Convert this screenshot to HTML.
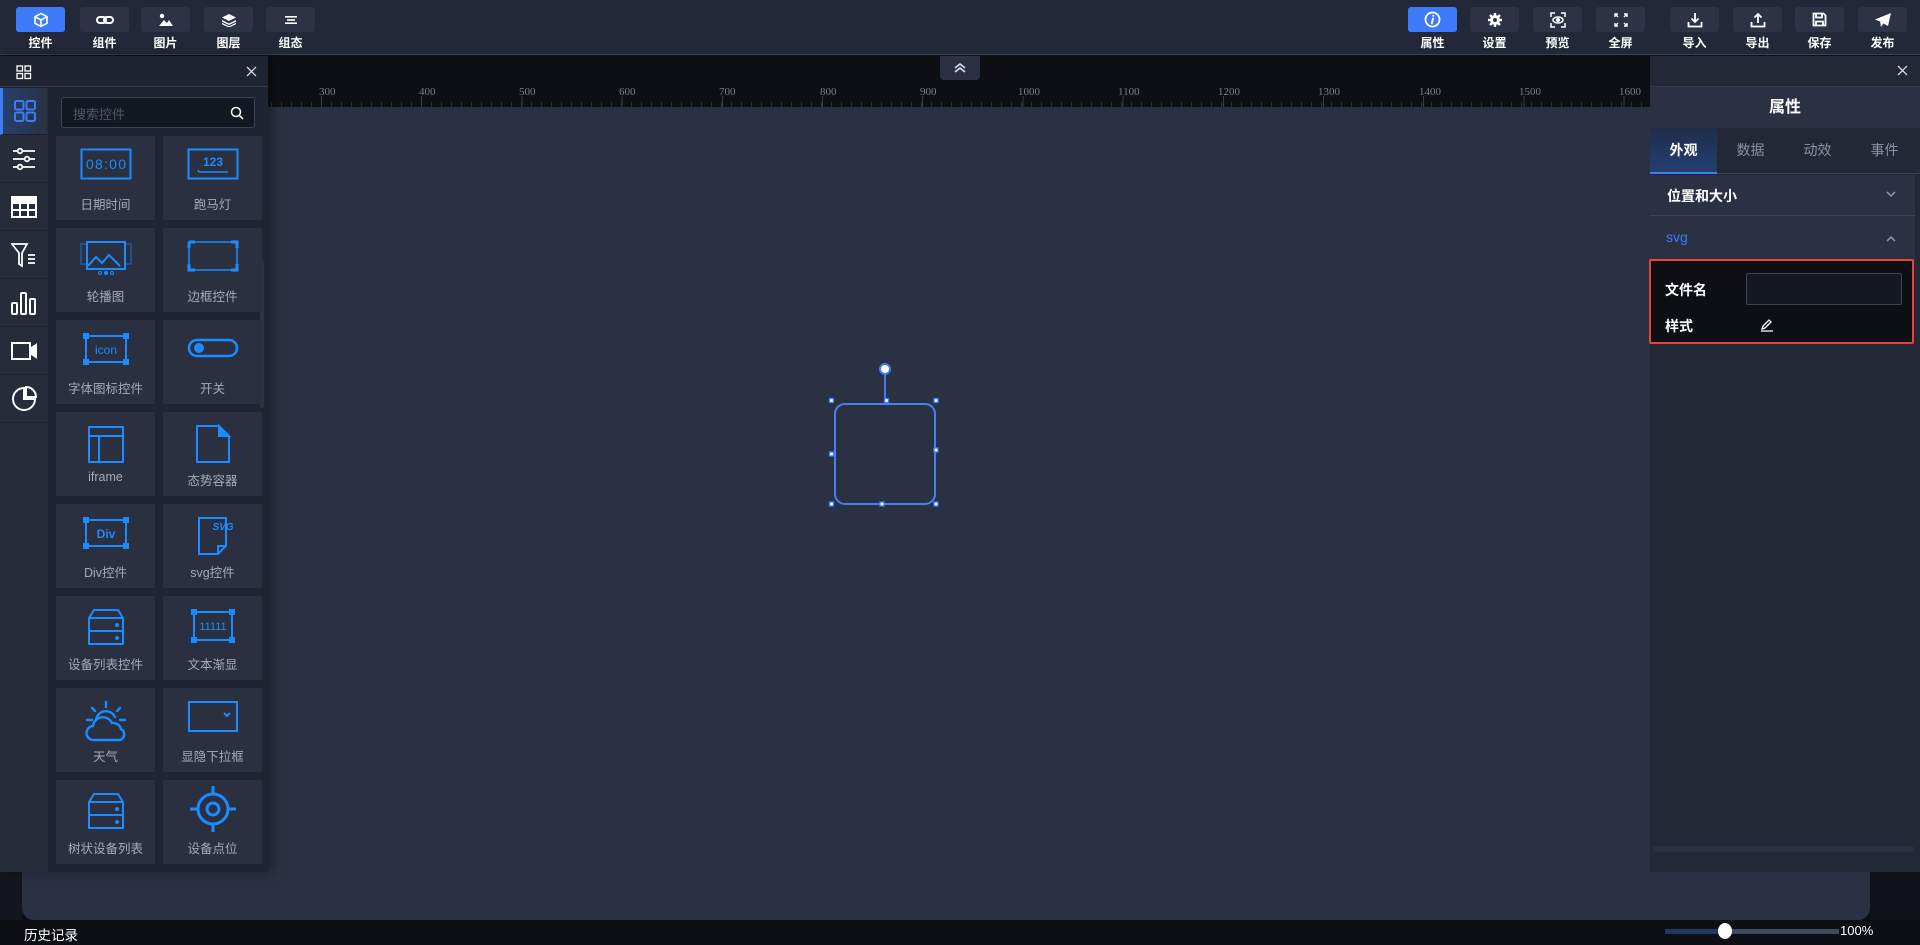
<!DOCTYPE html>
<html><head><meta charset="utf-8"><style>
*{box-sizing:border-box;margin:0;padding:0}
body{width:1920px;height:945px;overflow:hidden;background:#0d0f14;font-family:"Liberation Sans","Noto Sans CJK SC",sans-serif;position:relative;color:#fff}
.a{position:absolute}
.top{left:0;top:0;width:1920px;height:55px;background:#222837;border-bottom:1px solid #3a4358}
.tb{position:absolute;top:7px;width:49px;height:25px;background:#2c3344;border-radius:3px;display:flex;align-items:center;justify-content:center}
.tb.on{background:#3e7bfa}
.tl{position:absolute;top:34px;width:49px;text-align:center;font-size:12px;font-weight:bold;color:#fff}
.card{position:absolute;background:#2a3040;width:99px;height:84px}
.card .lb{position:absolute;left:0;right:0;top:58px;text-align:center;font-size:12.5px;color:#a3abbb}
.card svg{position:absolute;left:50%;top:12px;transform:translateX(-50%)}
.side{position:absolute;left:0;width:47px;height:47px;border-bottom:1px solid #1a1f2a;display:flex;align-items:center;justify-content:center}
.rl{position:absolute;top:86px;font-family:"Liberation Serif",serif;font-size:11px;color:#7a7f89}
</style></head><body>
<div class="a top">
<div class="tb on" style="left:16px"><svg width="16" height="16" viewBox="0 0 16 16" fill="none" stroke="#fff" stroke-width="1.6"><path d="M8 1.5l6 3.2v6.6L8 14.5 2 11.3V4.7z M2 4.7L8 8l6-3.3 M8 8v6.5"/></svg></div><div class="tl" style="left:16px">控件</div>
<div class="tb" style="left:80px"><svg width="18" height="10" viewBox="0 0 18 10" fill="none" stroke="#fff" stroke-width="2"><rect x="1" y="2" width="9" height="6" rx="3"/><rect x="8" y="2" width="9" height="6" rx="3"/></svg></div><div class="tl" style="left:80px">组件</div>
<div class="tb" style="left:141px"><svg width="16" height="14" viewBox="0 0 16 14" fill="#fff"><circle cx="4" cy="3" r="2.2"/><path d="M1 13l5-6 3 3 2-3 4 6z"/></svg></div><div class="tl" style="left:141px">图片</div>
<div class="tb" style="left:204px"><svg width="16" height="14" viewBox="0 0 16 14" fill="#fff"><path d="M8 1l7 3.5-7 3.5-7-3.5z"/><path d="M1 7l7 3.5L15 7v1.6L8 12 1 8.6z" /><path d="M1 9.8l7 3.5 7-3.5v1.4L8 14.5 1 11.2z"/></svg></div><div class="tl" style="left:204px">图层</div>
<div class="tb" style="left:266px"><svg width="14" height="10" viewBox="0 0 14 10" fill="#fff"><rect x="1" y="1" width="12" height="1.6"/><rect x="3" y="4.2" width="8" height="1.6"/><rect x="1" y="7.4" width="12" height="1.6"/></svg></div><div class="tl" style="left:266px">组态</div>

<div class="tb on" style="left:1408px"><svg width="17" height="17" viewBox="0 0 17 17" fill="none" stroke="#fff" stroke-width="1.8"><circle cx="8.5" cy="8.5" r="7"/><path d="M9 7.5l-1.2 5 M9.3 4.5v.5" stroke-linecap="round"/></svg></div><div class="tl" style="left:1408px">属性</div>
<div class="tb" style="left:1470px"><svg width="14" height="14" viewBox="0 0 14 14"><circle cx="7" cy="7" r="5" fill="#fff"/><g stroke="#fff" stroke-width="2.4"><path d="M7 0v14M0 7h14M2 2l10 10M12 2L2 12"/></g><circle cx="7" cy="7" r="2" fill="#2c3344"/></svg></div><div class="tl" style="left:1470px">设置</div>
<div class="tb" style="left:1533px"><svg width="16" height="16" viewBox="0 0 16 16" fill="none" stroke="#fff" stroke-width="1.5"><path d="M1 5V1h4M11 1h4v4M15 11v4h-4M5 15H1v-4"/><ellipse cx="8" cy="8" rx="5" ry="3"/><circle cx="8" cy="8" r="1.3" fill="#fff"/></svg></div><div class="tl" style="left:1533px">预览</div>
<div class="tb" style="left:1596px"><svg width="14" height="14" viewBox="0 0 14 14" fill="none" stroke="#fff" stroke-width="1.4"><path d="M1 4V1h3M1 1l3 3M10 1h3v3M13 1l-3 3M13 10v3h-3M13 13l-3-3M4 13H1v-3M1 13l3-3"/></svg></div><div class="tl" style="left:1596px">全屏</div>
<div class="tb" style="left:1670px"><svg width="16" height="16" viewBox="0 0 16 16" fill="none" stroke="#fff" stroke-width="1.8"><path d="M8 1v9M4.5 6.5L8 10l3.5-3.5M1.5 10v4.5h13V10"/></svg></div><div class="tl" style="left:1670px">导入</div>
<div class="tb" style="left:1733px"><svg width="16" height="16" viewBox="0 0 16 16" fill="none" stroke="#fff" stroke-width="1.8"><path d="M8 11V2M4.5 5.5L8 2l3.5 3.5M1.5 10v4.5h13V10"/></svg></div><div class="tl" style="left:1733px">导出</div>
<div class="tb" style="left:1795px"><svg width="15" height="15" viewBox="0 0 15 15" fill="none" stroke="#fff" stroke-width="1.8"><path d="M1.5 1.5h10l2 2v10h-12z M4 1.5v4h6v-4 M4 13.5v-4h7v4"/></svg></div><div class="tl" style="left:1795px">保存</div>
<div class="tb" style="left:1858px"><svg width="18" height="16" viewBox="0 0 18 16"><path d="M17 1L1 7.5l5 2z" fill="#fff"/><path d="M17 1L6 9.5l1 5.5 2.5-3.5L14 14z" fill="#fff"/></svg></div><div class="tl" style="left:1858px">发布</div>
</div>

<div class="a" style="left:268px;top:56px;width:1382px;height:51px;background:#0d0f15;background-image:repeating-linear-gradient(90deg,#2c3038 0 1px,transparent 1px 10px);background-size:100% 5px;background-repeat:no-repeat;background-position:3px 46px"></div>
<div class="a" style="left:268px;top:56px;width:1382px;height:51px;background-image:repeating-linear-gradient(90deg,#3a3e48 0 1px,transparent 1px 100.2px);background-size:100% 11px;background-repeat:no-repeat;background-position:53px 40px"></div>
<div class="rl" style="left:319px">300</div><div class="rl" style="left:419px">400</div><div class="rl" style="left:519px">500</div><div class="rl" style="left:619px">600</div><div class="rl" style="left:719px">700</div><div class="rl" style="left:820px">800</div><div class="rl" style="left:920px">900</div><div class="rl" style="left:1018px">1000</div><div class="rl" style="left:1118px">1100</div><div class="rl" style="left:1218px">1200</div><div class="rl" style="left:1318px">1300</div><div class="rl" style="left:1419px">1400</div><div class="rl" style="left:1519px">1500</div><div class="rl" style="left:1619px">1600</div>
<div class="a" style="left:940px;top:56px;width:40px;height:24px;background:#2a3142;border-radius:0 0 4px 4px;display:flex;align-items:center;justify-content:center"><svg width="14" height="12" viewBox="0 0 14 12" fill="none" stroke="#dfe6f2" stroke-width="1.5"><path d="M2 6l5-4 5 4M2 10l5-4 5 4"/></svg></div>

<div class="a" style="left:268px;top:107px;width:1382px;height:765px;background:#2a3142"></div>
<div class="a" style="left:22px;top:872px;width:1848px;height:48px;background:#2a3142;border-radius:0 0 12px 12px"></div>
<div class="a" style="left:0;top:872px;width:22px;height:48px;background:#13161e"></div>
<div class="a" style="left:1870px;top:872px;width:50px;height:48px;background:#0f1218"></div>

<svg class="a" style="left:826px;top:360px" width="120" height="152" viewBox="826 360 120 152">
<line x1="885" y1="369" x2="885" y2="402" stroke="#3e7bfa" stroke-width="2"/>
<circle cx="885" cy="369" r="5" fill="#fff" stroke="#3e7bfa" stroke-width="2"/>
<rect x="835" y="404" width="100" height="100" rx="10" fill="none" stroke="#4d7df0" stroke-width="2"/>
<g fill="#fff" stroke="#3e7bfa" stroke-width="1.3"><rect x="829.5" y="398.5" width="4" height="4"/><rect x="884.5" y="398.5" width="4" height="4"/><rect x="934" y="398.5" width="4" height="4"/><rect x="829.5" y="452" width="4" height="4"/><rect x="934" y="448" width="4" height="4"/><rect x="829.5" y="502" width="4" height="4"/><rect x="880" y="502" width="4" height="4"/><rect x="934" y="502" width="4" height="4"/></g>
</svg>

<div class="a" style="left:0;top:56px;width:268px;height:816px;background:#1f2432;box-shadow:4px 0 10px rgba(0,0,0,.35)">
<div class="a" style="left:0;top:0;width:268px;height:31px;border-bottom:1px solid #343b4c"></div>
<svg class="a" style="left:16px;top:9px" width="16" height="15" viewBox="0 0 16 15" fill="none" stroke="#fff" stroke-width="1.3"><rect x="1" y="1" width="5.5" height="5"/><rect x="9" y="1" width="5.5" height="5"/><rect x="1" y="8.5" width="5.5" height="5"/><rect x="9" y="8.5" width="5.5" height="5"/></svg>
<svg class="a" style="left:246px;top:10px" width="11" height="11" viewBox="0 0 11 11" stroke="#ddd" stroke-width="1.3"><path d="M1 1l9 9M10 1l-9 9"/></svg>
<div class="a" style="left:0;top:32px;width:48px;height:784px;background:#262c3a"></div>
</div>
<div class="side" style="top:88px;background:linear-gradient(90deg,#24406e,#2a3142);border-left:3px solid #3e7bfa"><svg width="24" height="24" viewBox="0 0 24 24" fill="none" stroke="#3e7bfa" stroke-width="2"><rect x="2" y="2" width="8.5" height="8.5" rx="1.5"/><rect x="13.5" y="2" width="8.5" height="8.5" rx="1.5"/><rect x="2" y="13.5" width="8.5" height="8.5" rx="1.5"/><rect x="13.5" y="13.5" width="8.5" height="8.5" rx="1.5"/></svg></div>
<div class="side" style="top:136px"><svg width="24" height="22" viewBox="0 0 24 22" fill="none" stroke="#fff" stroke-width="1.8"><path d="M1 3h22M1 11h22M1 19h22"/><circle cx="8" cy="3" r="2.3" fill="#262c3a"/><circle cx="15" cy="11" r="2.3" fill="#262c3a"/><circle cx="8" cy="19" r="2.3" fill="#262c3a"/></svg></div>
<div class="side" style="top:184px"><svg width="26" height="22" viewBox="0 0 26 22" fill="none" stroke="#fff" stroke-width="2"><rect x="1" y="1" width="24" height="20"/><path d="M1 7h24M1 14h24M9 7v14M17 7v14"/><rect x="1" y="1" width="24" height="6" fill="#fff"/></svg></div>
<div class="side" style="top:232px"><svg width="26" height="26" viewBox="0 0 26 26" fill="none" stroke="#fff" stroke-width="1.8"><path d="M1 2h15l-5 9v13l-3-2V11z M17 13h7M17 17h7M17 21h7"/></svg></div>
<div class="side" style="top:280px"><svg width="26" height="24" viewBox="0 0 26 24" fill="none" stroke="#fff" stroke-width="2"><rect x="1" y="12" width="5" height="11" rx="1"/><rect x="10" y="2" width="5" height="21" rx="1"/><rect x="19" y="8" width="5" height="15" rx="1"/></svg></div>
<div class="side" style="top:328px"><svg width="26" height="18" viewBox="0 0 26 18" fill="none" stroke="#fff" stroke-width="2"><rect x="1" y="1" width="18" height="16"/><path d="M19 7l6-4v12l-6-4" fill="#fff"/></svg></div>
<div class="side" style="top:376px"><svg width="26" height="26" viewBox="0 0 26 26" fill="none" stroke="#fff" stroke-width="2"><path d="M13 2a11 11 0 1 0 11 11H13z"/><path d="M15 1a10 10 0 0 1 10 10H15z"/></svg></div>

<div class="a" style="left:61px;top:97px;width:194px;height:31px;background:#141823;border:1px solid #3b4357;border-radius:3px"><span class="a" style="left:11px;top:6px;font-size:13px;color:#4f5667">搜索控件</span><svg class="a" style="left:168px;top:8px" width="14" height="14" viewBox="0 0 14 14" fill="none" stroke="#fff" stroke-width="1.5"><circle cx="6" cy="6" r="4.5"/><path d="M9.3 9.3L13 13"/></svg></div>
<div class="a" style="left:260px;top:260px;width:4px;height:148px;background:#2c3343;border-radius:2px"></div>

<div class="card" style="left:56px;top:136px"><svg width="52" height="32" viewBox="0 0 52 32"><rect x="1.5" y="1.5" width="49" height="29" fill="none" stroke="#1a8cff" stroke-width="2"/><text x="26" y="21" text-anchor="middle" font-size="14" fill="#1a8cff" font-family="Liberation Sans,sans-serif" textLength="40">08:00</text></svg><div class="lb">日期时间</div></div>
<div class="card" style="left:163px;top:136px"><svg width="52" height="32" viewBox="0 0 52 32"><rect x="1.5" y="1.5" width="49" height="29" fill="none" stroke="#1a8cff" stroke-width="2"/><text x="26" y="18" text-anchor="middle" font-size="12" fill="#1a8cff" font-weight="bold">123</text><path d="M12 24h29M12 24l-1-2" stroke="#1a8cff" stroke-width="1.5"/></svg><div class="lb">跑马灯</div></div>

<div class="card" style="left:56px;top:228px"><svg width="52" height="36" viewBox="0 0 52 36" fill="none"><rect x="1" y="4" width="50" height="20" stroke="#1a5aa8" stroke-width="1.5"/><rect x="7" y="2" width="38" height="27" stroke="#1a8cff" stroke-width="2" fill="#2a3040"/><path d="M8 26l8-9 6 6 7-8 11 11" stroke="#1a8cff" stroke-width="2"/><g fill="none" stroke="#1a8cff"><circle cx="20" cy="33" r="1.5"/><circle cx="26" cy="33" r="1.5" fill="#1a8cff"/><circle cx="32" cy="33" r="1.5"/></g></svg><div class="lb">轮播图</div></div>
<div class="card" style="left:163px;top:228px"><svg width="52" height="32" viewBox="0 0 52 32"><rect x="2" y="2" width="48" height="28" fill="none" stroke="#1a8cff" stroke-width="1.5"/><path d="M2 2h6M44 2h6v6M2 24v6h6M44 30h6v-6M2 2v6" stroke="#1a8cff" stroke-width="3" fill="none"/></svg><div class="lb">边框控件</div></div>

<div class="card" style="left:56px;top:320px"><svg width="48" height="34" viewBox="0 0 48 34"><rect x="4" y="4" width="40" height="26" fill="none" stroke="#1a8cff" stroke-width="2"/><g fill="#1a8cff"><rect x="1" y="1" width="6" height="6"/><rect x="41" y="1" width="6" height="6"/><rect x="1" y="27" width="6" height="6"/><rect x="41" y="27" width="6" height="6"/></g><text x="24" y="22" text-anchor="middle" font-size="12" fill="#1a8cff">icon</text></svg><div class="lb">字体图标控件</div></div>
<div class="card" style="left:163px;top:320px"><svg width="52" height="32" viewBox="0 0 52 32"><rect x="2" y="8" width="48" height="16" rx="8" fill="none" stroke="#1a8cff" stroke-width="2.5"/><circle cx="12" cy="16" r="5" fill="#1a8cff"/></svg><div class="lb">开关</div></div>

<div class="card" style="left:56px;top:412px"><svg width="40" height="40" viewBox="0 0 40 40" fill="none" stroke="#1a8cff" stroke-width="2"><rect x="3" y="3" width="34" height="35"/><path d="M3 12h34M13 12v26"/></svg><div class="lb">iframe</div></div>
<div class="card" style="left:163px;top:412px"><svg width="40" height="40" viewBox="0 0 40 40" fill="none" stroke="#1a8cff" stroke-width="2"><path d="M4 2h22l10 10v26H4z"/><path d="M26 2v10h10z" fill="#1a8cff"/></svg><div class="lb">态势容器</div></div>

<div class="card" style="left:56px;top:504px"><svg width="48" height="34" viewBox="0 0 48 34"><rect x="4" y="4" width="40" height="26" fill="none" stroke="#1a8cff" stroke-width="2"/><g fill="#1a8cff"><rect x="1" y="1" width="6" height="6"/><rect x="41" y="1" width="6" height="6"/><rect x="1" y="27" width="6" height="6"/><rect x="41" y="27" width="6" height="6"/></g><text x="24" y="22" text-anchor="middle" font-size="12" fill="#1a8cff" font-weight="bold">Div</text></svg><div class="lb">Div控件</div></div>
<div class="card" style="left:163px;top:504px"><svg width="40" height="40" viewBox="0 0 40 40" fill="none" stroke="#1a8cff" stroke-width="2"><path d="M6 2h27v28l-8 8H6z"/><path d="M33 30h-8v8"/><text x="30" y="14" text-anchor="middle" font-size="10" fill="#1a8cff" stroke="none" font-style="italic" font-weight="bold">SVG</text></svg><div class="lb">svg控件</div></div>

<div class="card" style="left:56px;top:596px"><svg width="40" height="38" viewBox="0 0 40 38" fill="none" stroke="#1a8cff" stroke-width="2"><path d="M8 2h24l5 8v26H3V10z M3 10h34 M3 23h34"/><circle cx="31" cy="17" r="1" fill="#1a8cff"/><circle cx="31" cy="30" r="1" fill="#1a8cff"/></svg><div class="lb">设备列表控件</div></div>
<div class="card" style="left:163px;top:596px"><svg width="46" height="36" viewBox="0 0 46 36"><rect x="4" y="4" width="38" height="28" fill="none" stroke="#1a8cff" stroke-width="2"/><g fill="#1a8cff"><rect x="1" y="1" width="6" height="6"/><rect x="39" y="1" width="6" height="6"/><rect x="1" y="29" width="6" height="6"/><rect x="39" y="29" width="6" height="6"/></g><text x="23" y="22" text-anchor="middle" font-size="11" fill="#1a8cff">11111</text></svg><div class="lb">文本渐显</div></div>

<div class="card" style="left:56px;top:688px"><svg width="44" height="44" viewBox="0 0 44 44" fill="none" stroke="#1a8cff" stroke-width="2.4" stroke-linecap="round"><path d="M22 2v5M8 8l3 3M36 8l-3 3M3 20h5M36 20h5"/><path d="M12 20a10 10 0 0 1 19-3"/><path d="M10 40a7 7 0 0 1-1-14 10 10 0 0 1 19-3 8 8 0 0 1 9 6 6 6 0 0 1-1 11z"/></svg><div class="lb">天气</div></div>
<div class="card" style="left:163px;top:688px"><svg width="52" height="34" viewBox="0 0 52 34" fill="none" stroke="#1a8cff" stroke-width="2"><rect x="2" y="2" width="48" height="29"/><path d="M37 13l3 3 3-3"/></svg><div class="lb">显隐下拉框</div></div>

<div class="card" style="left:56px;top:780px"><svg width="40" height="38" viewBox="0 0 40 38" fill="none" stroke="#1a8cff" stroke-width="2"><path d="M8 2h24l5 8v26H3V10z M3 10h34 M3 23h34"/><circle cx="31" cy="17" r="1" fill="#1a8cff"/><circle cx="31" cy="30" r="1" fill="#1a8cff"/></svg><div class="lb">树状设备列表</div></div>
<div class="card" style="left:163px;top:780px"><svg width="50" height="50" viewBox="0 0 50 50" fill="none" stroke="#1a8cff" stroke-width="3" style="top:4px"><circle cx="25" cy="25" r="15"/><circle cx="25" cy="25" r="6"/><path d="M25 2v8M25 40v8M2 25h8M40 25h8"/></svg><div class="lb">设备点位</div></div>

<div class="a" style="left:1650px;top:56px;width:270px;height:816px;background:#222836"></div>
<svg class="a" style="left:1897px;top:65px" width="11" height="11" viewBox="0 0 11 11" stroke="#ddd" stroke-width="1.3"><path d="M1 1l9 9M10 1l-9 9"/></svg>
<div class="a" style="left:1650px;top:86px;width:270px;height:1px;background:#343b4c"></div>
<div class="a" style="left:1650px;top:87px;width:270px;height:41px;background:#2a3142;text-align:center;font-size:16px;font-weight:bold;line-height:41px">属性</div>
<div class="a" style="left:1650px;top:128px;width:270px;height:46px;background:#222836;border-bottom:1px solid #3a4358"></div>
<div class="a" style="left:1650px;top:128px;width:67px;height:46px;background:linear-gradient(180deg,#1f2d48,#223f72);border-bottom:2px solid #3e7bfa;text-align:center;line-height:44px;font-size:14px;font-weight:bold">外观</div>
<div class="a" style="left:1717px;top:128px;width:67px;line-height:44px;text-align:center;font-size:14px;color:#8a92a3">数据</div>
<div class="a" style="left:1784px;top:128px;width:67px;line-height:44px;text-align:center;font-size:14px;color:#8a92a3">动效</div>
<div class="a" style="left:1851px;top:128px;width:67px;line-height:44px;text-align:center;font-size:14px;color:#8a92a3">事件</div>
<div class="a" style="left:1650px;top:175px;width:265px;height:41px;background:#2a3142;border-bottom:1px solid #3a4358"><span class="a" style="left:17px;top:11px;font-size:14px;font-weight:bold">位置和大小</span><svg class="a" style="left:236px;top:16px" width="10" height="7" viewBox="0 0 10 7" fill="none" stroke="#8a92a3" stroke-width="1.6"><path d="M1 1l4 4 4-4"/></svg></div>
<div class="a" style="left:1650px;top:216px;width:265px;height:45px;background:#2a3142"><span class="a" style="left:16px;top:13px;font-size:14px;color:#3e7bfa">svg</span><svg class="a" style="left:236px;top:19px" width="10" height="7" viewBox="0 0 10 7" fill="none" stroke="#8a92a3" stroke-width="1.6"><path d="M1 6l4-4 4 4"/></svg></div>
<div class="a" style="left:1649px;top:259px;width:265px;height:85px;background:#0d0f15;border:2.5px solid #e8423b;border-radius:2px">
<span class="a" style="left:14px;top:19px;font-size:14px;font-weight:bold">文件名</span>
<div class="a" style="left:95px;top:12px;width:156px;height:32px;background:#141823;border:1px solid #3b4357;border-radius:2px"></div>
<span class="a" style="left:14px;top:55px;font-size:14px;font-weight:bold">样式</span>
<svg class="a" style="left:109px;top:57px" width="14" height="14" viewBox="0 0 14 14" fill="none" stroke="#fff" stroke-width="1.3"><path d="M2 11l1-3 6-6 2 2-6 6z M1 13h12"/></svg>
</div>
<div class="a" style="left:1653px;top:846px;width:260px;height:6px;background:#2a3142"></div>

<div class="a" style="left:24px;top:924px;font-size:13.5px;color:#fff">历史记录</div>
<div class="a" style="left:1665px;top:929px;width:59px;height:5px;background:#1e3a5f"></div>
<div class="a" style="left:1724px;top:929px;width:115px;height:5px;background:#3e4a63"></div>
<div class="a" style="left:1718px;top:923px;width:14px;height:16px;background:#fff;border-radius:50%"></div>
<div class="a" style="left:1840px;top:923px;font-size:13px;color:#fff">100%</div>
</body></html>
